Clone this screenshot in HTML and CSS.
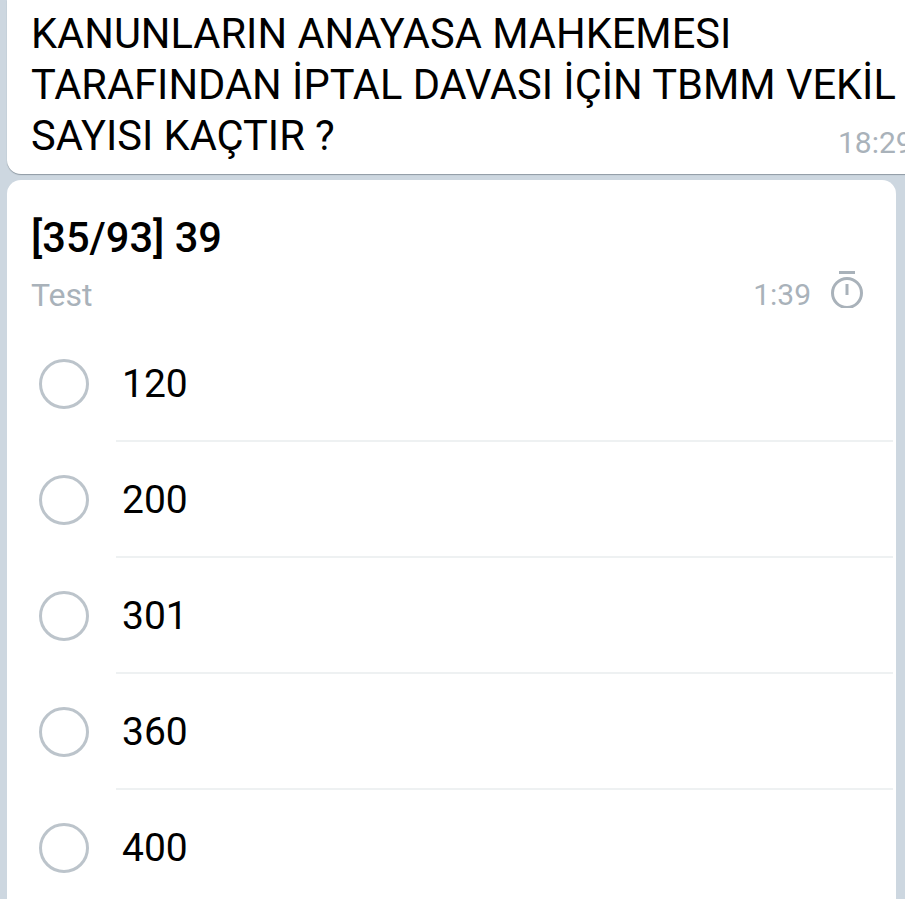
FILE: index.html
```html
<!DOCTYPE html>
<html lang="en">
<head>
    <meta charset="UTF-8">
    <meta name="viewport" content="width=device-width, initial-scale=1.0">
    <title>Test</title>
    <link rel="stylesheet" href="styles.css">
</head>
<body>
    <div class="message">
        <p class="message-text">KANUNLARIN ANAYASA MAHKEMESI<br>TARAFINDAN İPTAL DAVASI İÇİN TBMM VEKİL<br>SAYISI KAÇTIR ?</p>
        <div class="message-time">18:29</div>
    </div>

    <div class="poll">
        <h2 class="poll-title">[35/93] 39</h2>
        <div class="poll-meta">
            <span class="poll-type">Test</span>
            <span class="poll-timer">1:39
                <svg class="timer-icon" viewBox="0 0 32 37" width="32" height="37" fill="none" stroke="#a9b2ba" stroke-width="3">
                    <path d="M8 1.5h16"/>
                    <circle cx="16" cy="22" r="14.5"/>
                    <path d="M16 13v11"/>
                </svg>
            </span>
        </div>
        <div class="option"><span class="radio"></span><span class="option-label">120</span></div>
        <div class="option"><span class="radio"></span><span class="option-label">200</span></div>
        <div class="option"><span class="radio"></span><span class="option-label">301</span></div>
        <div class="option"><span class="radio"></span><span class="option-label">360</span></div>
        <div class="option"><span class="radio"></span><span class="option-label">400</span></div>
    </div>
</body>
</html>
```

FILE: styles.css
```css
html, body {
    height: 899px;
    overflow: hidden;
}
body {
    margin: 0;
    padding: 0 0 0 7px;
    font-family: Roboto, "Liberation Sans", sans-serif;
    background-color: #cdd7e0;
    color: #000;
}
.message {
    width: 940px;
    height: 174px;
    box-sizing: border-box;
    padding: 8px 0 0 24px;
    background-color: #fff;
    border-radius: 0 0 14px 14px;
    box-shadow: 0 1px 1px #8f9aa3;
}
.message-text {
    margin: 0;
    font-size: 41.6px;
    line-height: 51px;
}
.message-time {
    margin: -35px 0 0 807px;
    font-size: 30px;
    line-height: 34px;
    color: #a9b2ba;
}
.poll {
    width: 889px;
    height: 760px;
    margin-top: 6px;
    padding-top: 34px;
    box-sizing: border-box;
    background-color: #fff;
    border-radius: 14px 14px 0 0;
}
.poll-title {
    margin: 0 0 0 24px;
    font-size: 41.6px;
    font-weight: 500;
    line-height: 48px;
}
.poll-meta {
    display: flex;
    justify-content: space-between;
    align-items: center;
    margin: 8px 33px 8px 24px;
    height: 48px;
    font-size: 30px;
    color: #a9b2ba;
}
.poll-type {
    padding-top: 2px;
    font-size: 32px;
}
.poll-timer {
    display: flex;
    align-items: center;
    gap: 20px;
}
.timer-icon {
    flex: none;
    margin-bottom: 10px;
}
.option {
    display: flex;
    align-items: center;
    height: 116px;
    padding-left: 32px;
    position: relative;
}
.radio {
    width: 44px;
    height: 44px;
    border: 3px solid #bcc4cb;
    border-radius: 50%;
    flex: none;
}
.option-label {
    margin-left: 33px;
    font-size: 39px;
}
.option:not(:last-child)::after {
    content: "";
    position: absolute;
    left: 109px;
    right: 3px;
    bottom: 0;
    height: 2px;
    background-color: #eef1f2;
}
```
